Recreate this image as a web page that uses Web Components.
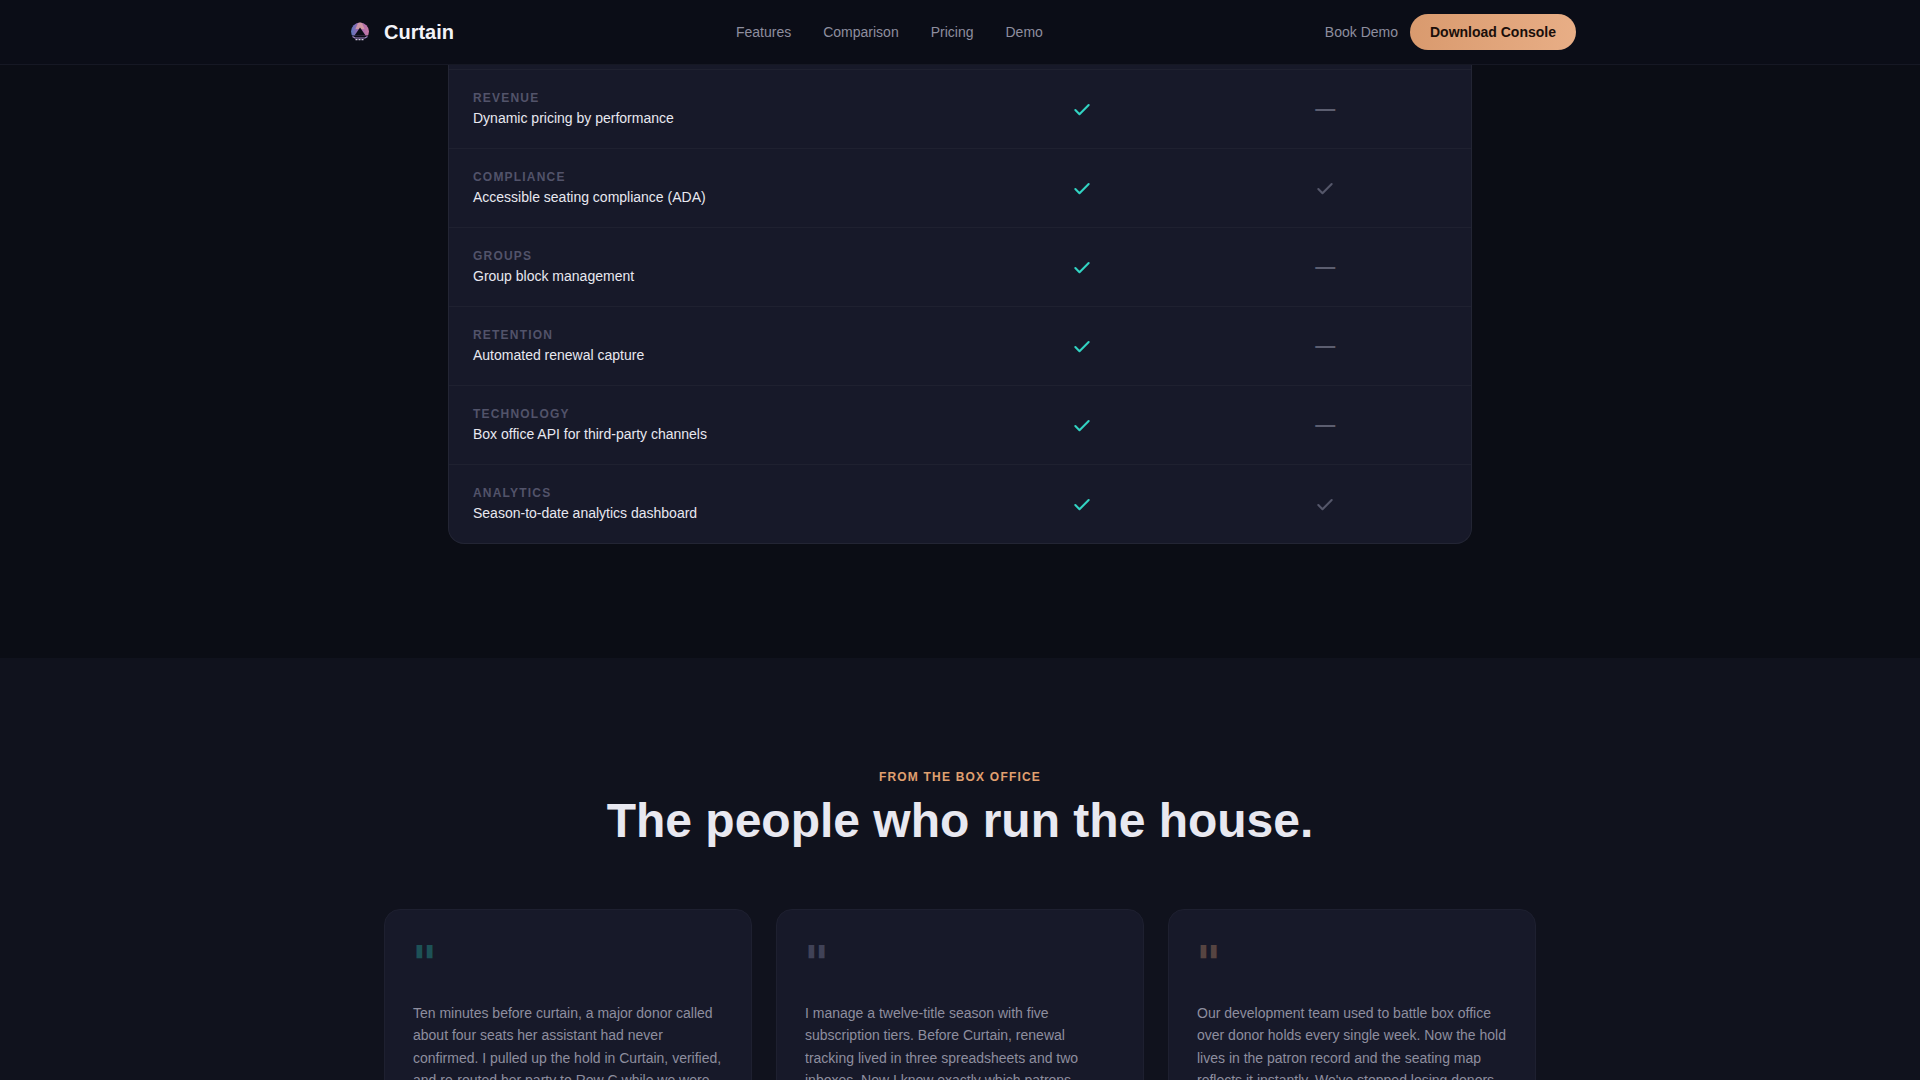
<!DOCTYPE html>
<html lang="en">
<meta charset="UTF-8">
<title>Curtain</title>
<style>
  html, body {
    margin: 0;
    height: 1080px;
    overflow: hidden;
    background: #0b0d15;
    color: #e8e8f0;
    font-family: "Liberation Sans", Arial, sans-serif;
  }
</style>

<body>
<site-nav>
  <a href="#features">Features</a>
  <a href="#comparison">Comparison</a>
  <a href="#pricing">Pricing</a>
  <a href="#demo">Demo</a>
</site-nav>

<compare-table>
  <compare-row tag="Revenue" name="Dynamic pricing by performance" other="none"></compare-row>
  <compare-row tag="Compliance" name="Accessible seating compliance (ADA)" other="check"></compare-row>
  <compare-row tag="Groups" name="Group block management" other="none"></compare-row>
  <compare-row tag="Retention" name="Automated renewal capture" other="none"></compare-row>
  <compare-row tag="Technology" name="Box office API for third-party channels" other="none"></compare-row>
  <compare-row tag="Analytics" name="Season-to-date analytics dashboard" other="check"></compare-row>
</compare-table>

<quote-section eyebrow="From the box office" heading="The people who run the house.">
  <quote-card tint="#2dd4bf">Ten minutes before curtain, a major donor called about four seats her assistant had never confirmed. I pulled up the hold in Curtain, verified, and re-routed her party to Row C while we were still on the phone.</quote-card>
  <quote-card tint="#a0a0c0">I manage a twelve-title season with five subscription tiers. Before Curtain, renewal tracking lived in three spreadsheets and two inboxes. Now I know exactly which patrons haven't renewed yet.</quote-card>
  <quote-card tint="#e8a878">Our development team used to battle box office over donor holds every single week. Now the hold lives in the patron record and the seating map reflects it instantly. We've stopped losing donors to mix-ups.</quote-card>
</quote-section>

<script>
  class SiteNav extends HTMLElement {
    connectedCallback() {
      this.attachShadow({mode: 'open'}).innerHTML = `
        <style>
          :host {
            display: block;
            height: 64px;
            background: #0b0d17;
            border-bottom: 1px solid #161824;
          }
          .inner {
            box-sizing: border-box;
            max-width: 1280px;
            height: 64px;
            margin: 0 auto;
            padding: 0 24px;
            display: flex;
            align-items: center;
            justify-content: space-between;
          }
          .brand {
            display: flex;
            align-items: center;
            gap: 8px;
            color: #f2f2f8;
            font-size: 20px;
            font-weight: 700;
          }
          svg { display: block; }
          .links { display: flex; gap: 32px; }
          ::slotted(a) {
            color: #8e8e9f;
            font-size: 14px;
            text-decoration: none;
          }
          .actions { display: flex; align-items: center; gap: 12px; }
          .book { color: #8e8e9f; font-size: 14px; }
          .cta {
            height: 36px;
            padding: 0 20px;
            display: flex;
            align-items: center;
            border-radius: 18px;
            background: linear-gradient(90deg, #d99a6e, #e8ae86);
            color: #1a0f0a;
            font-size: 14px;
            font-weight: 700;
          }
        </style>
        <div class="inner">
          <div class="brand">
            <svg width="32" height="32" viewBox="0 0 32 32">
              <defs>
                <linearGradient id="lg" x1="0" y1="0" x2="1" y2="0">
                  <stop offset="0" stop-color="#5a78bc"/>
                  <stop offset=".4" stop-color="#9a68b4"/>
                  <stop offset="1" stop-color="#c978a4"/>
                </linearGradient>
              </defs>
              <circle cx="16" cy="15.5" r="9" fill="url(#lg)"/>
              <path d="M16 6.5 L18 7 L20.5 13 L11.5 13 L14 7 Z" fill="#e2a9a0" opacity=".7"/>
              <path d="M16 11.5 L21.5 19.5 L10.5 19.5 Z" fill="#0b0d17"/>
              <path d="M7 19.5 H25 V26 H7 Z" fill="#0b0d17"/>
              <path d="M8.5 20.5 L11 22 H21 L23.5 20.5" stroke="#a98ccc" stroke-width="1.2" fill="none"/>
              <path d="M11.5 23.7 H20.5" stroke="#d6cbe6" stroke-width="1.2" stroke-dasharray="2 1" fill="none"/>
            </svg>
            <span>Curtain</span>
          </div>
          <nav class="links"><slot></slot></nav>
          <div class="actions">
            <span class="book">Book Demo</span>
            <span class="cta">Download Console</span>
          </div>
        </div>`;
    }
  }

  class CompareTable extends HTMLElement {
    connectedCallback() {
      this.attachShadow({mode: 'open'}).innerHTML = `
        <style>
          :host {
            display: block;
            box-sizing: border-box;
            width: 1024px;
            height: 593px;
            margin: 0 auto;
          }
          .panel {
            box-sizing: border-box;
            height: 479px;
            padding-top: 4px;
            background: #171929;
            border: 1px solid #232534;
            border-top: 0;
            border-radius: 0 0 16px 16px;
          }
        </style>
        <div class="panel"><slot></slot></div>`;
    }
  }

  class CompareRow extends HTMLElement {
    connectedCallback() {
      const tick = (color) => `<svg width="20" height="20" viewBox="0 0 24 24" fill="none" stroke="${color}" stroke-width="2.5" stroke-linecap="round" stroke-linejoin="round"><path d="M20 6 9 17l-5-5"/></svg>`;
      const other = this.getAttribute('other') === 'check' ? tick('#55576a') : '<span class="dash">—</span>';
      this.attachShadow({mode: 'open'}).innerHTML = `
        <style>
          :host {
            display: grid;
            grid-template-columns: 2fr 1fr 1fr;
            box-sizing: border-box;
            height: 79px;
            padding: 0 24px;
            align-items: center;
            border-top: 1px solid #1f2130;
          }
          .tag {
            color: #52536a;
            font-size: 12px;
            font-weight: 700;
            letter-spacing: 1.2px;
            text-transform: uppercase;
            line-height: 18px;
            margin-bottom: 1px;
          }
          .name { color: #e8e8f0; font-size: 14px; line-height: 20px; padding-bottom: 1px; }
          .cell { display: flex; justify-content: center; align-items: center; }
          svg { display: block; margin-top: 2px; }
          .dash { color: #5c5e70; font-size: 20px; font-weight: 700; line-height: 20px; padding-bottom: 2px; }
        </style>
        <div>
          <div class="tag">${this.getAttribute('tag')}</div>
          <div class="name">${this.getAttribute('name')}</div>
        </div>
        <div class="cell">${tick('#32d3c2')}</div>
        <div class="cell">${other}</div>`;
    }
  }

  class QuoteSection extends HTMLElement {
    connectedCallback() {
      this.attachShadow({mode: 'open'}).innerHTML = `
        <style>
          :host {
            display: block;
            background: #10121d;
            padding-top: 111px;
            height: 311px;
            overflow: hidden;
          }
          .eyebrow {
            color: #e0a070;
            font-size: 12px;
            font-weight: 700;
            letter-spacing: 1.2px;
            line-height: 16px;
            text-transform: uppercase;
            text-align: center;
            margin-bottom: 6px;
          }
          h2 {
            margin: 0 0 58px;
            color: #e8e8f0;
            font-size: 48px;
            font-weight: 700;
            line-height: 60px;
            text-align: center;
          }
          .grid {
            width: 1152px;
            margin: 0 auto;
            display: grid;
            grid-template-columns: repeat(3, 1fr);
            gap: 24px;
          }
        </style>
        <div class="eyebrow">${this.getAttribute('eyebrow')}</div>
        <h2>${this.getAttribute('heading')}</h2>
        <div class="grid"><slot></slot></div>`;
    }
  }

  class QuoteCard extends HTMLElement {
    connectedCallback() {
      this.attachShadow({mode: 'open'}).innerHTML = `
        <style>
          :host {
            display: block;
            box-sizing: border-box;
            padding: 28px;
            background: #171929;
            border: 1px solid #1e2030;
            border-radius: 16px;
          }
          .mark {
            color: ${this.getAttribute('tint')};
            opacity: .3;
            font-family: "DejaVu Serif", serif;
            font-size: 48px;
            font-weight: 700;
            line-height: 48px;
            height: 46px;
            padding-top: 2px;
            margin: 0 0 16px -1px;
          }
          p { margin: 0; color: #8e8e9f; font-size: 14px; line-height: 22.4px; }
        </style>
        <div class="mark">"</div>
        <p><slot></slot></p>`;
    }
  }

  customElements.define('site-nav', SiteNav);
  customElements.define('compare-table', CompareTable);
  customElements.define('compare-row', CompareRow);
  customElements.define('quote-section', QuoteSection);
  customElements.define('quote-card', QuoteCard);
</script>
</body>
</html>
